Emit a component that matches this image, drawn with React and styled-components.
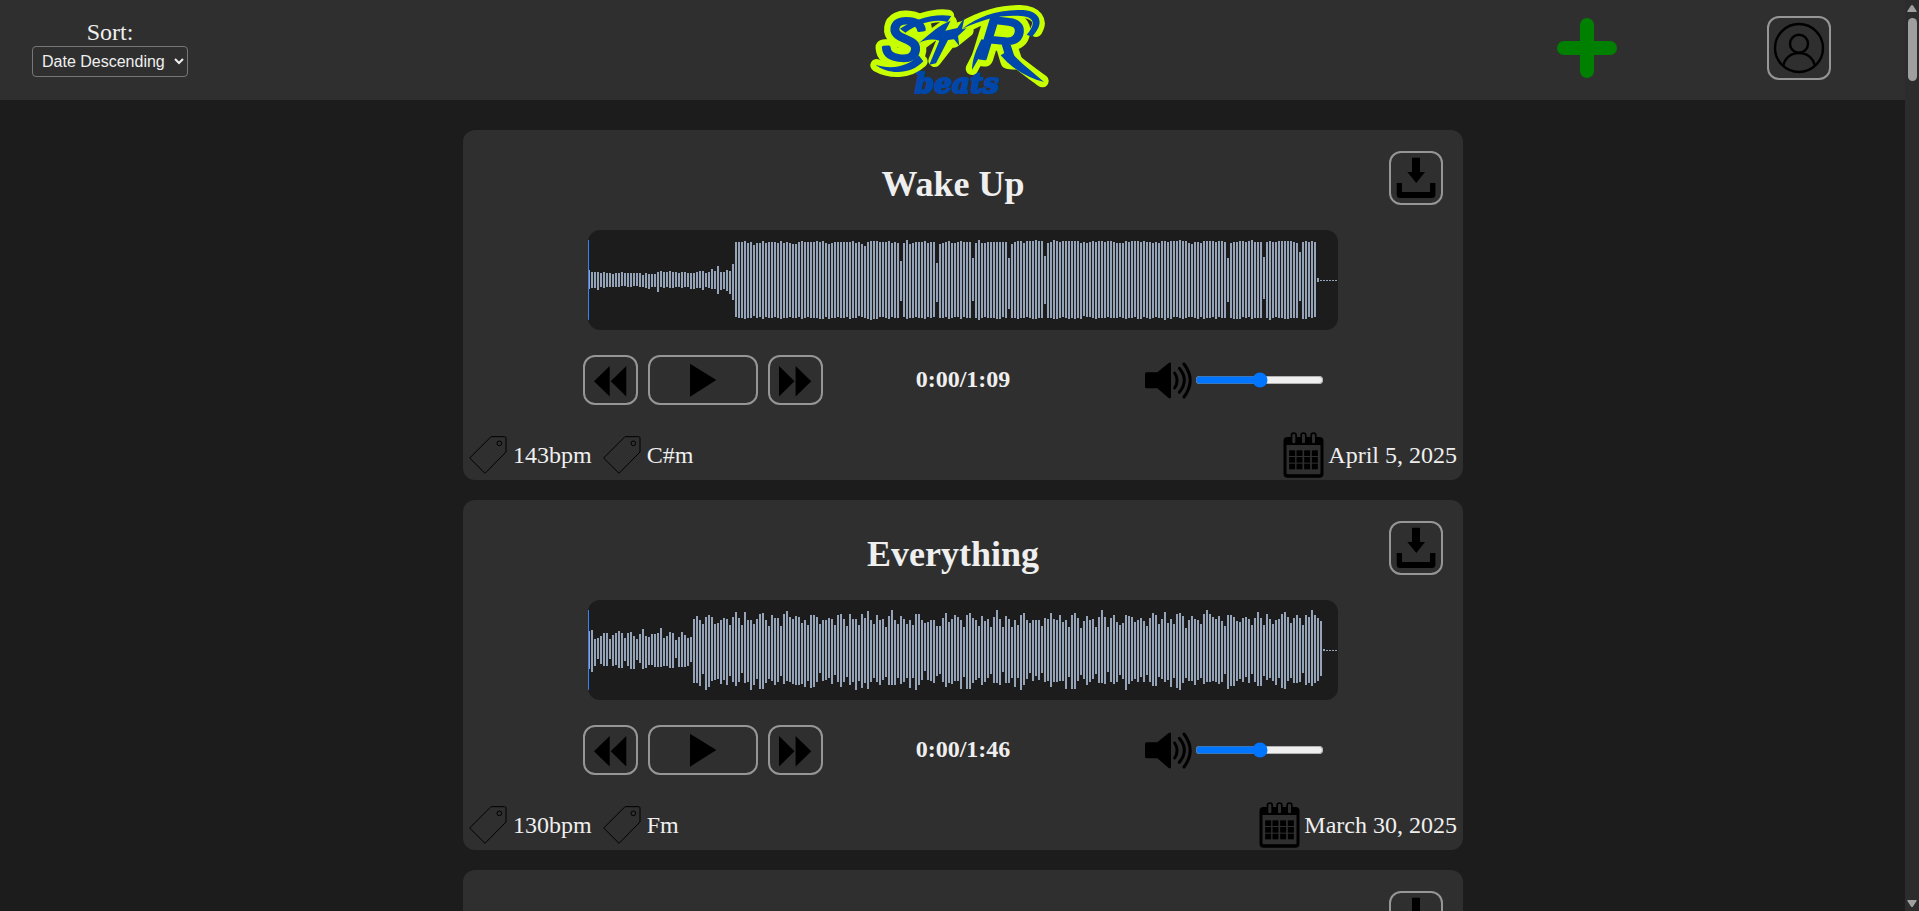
import React from "react";
import styled, { createGlobalStyle } from "styled-components";

const GlobalStyle = createGlobalStyle`
  * { box-sizing: border-box; }
  body {
    margin: 0;
    background: #1c1c1c;
    color: #efefef;
    font-family: "Liberation Serif", "Times New Roman", serif;
    font-size: 24px;
  }
`;

/* ---------- page frame ---------- */

const Shell = styled.div`
  display: flex;
  height: 100vh;
`;

const Page = styled.div`
  flex: 1;
  min-width: 0;
  overflow-y: auto;
  scrollbar-width: none;
`;

const ScrollTrack = styled.div`
  display: flex;
  flex-direction: column;
  align-items: center;
  width: 14px;
  padding: 5px 0 4px;
  background: #2c2c2c;
`;

const ScrollThumb = styled.div`
  width: 9px;
  height: 63px;
  margin: 6px 0 auto;
  border-radius: 5px;
  background: #9f9f9f;
`;

/* ---------- header ---------- */

const TopBar = styled.header`
  display: grid;
  grid-template-columns: 1fr auto 1fr;
  align-items: center;
  height: 100px;
  padding: 0 74px 0 32px;
  background: #2f2f2f;
`;

const SortBox = styled.div`
  display: flex;
  flex-direction: column;
  align-items: center;
  justify-self: start;
  padding-bottom: 4px;
`;

const SortLabel = styled.label`
  line-height: 27px;
`;

const SortSelect = styled.select`
  width: 156px;
  height: 31px;
  padding: 0 5px;
  border: 1px solid #767676;
  border-radius: 4px;
  background-color: #2f2f2f;
  color: #efefef;
  font-family: "Liberation Sans", Arial, sans-serif;
  font-size: 16px;
`;

const HomeLink = styled.a`
  display: block;
  height: 100px;
  margin-left: 57px;
`;

const LogoSvg = styled.svg`
  display: block;
  overflow: visible;
`;

const Actions = styled.div`
  display: flex;
  align-items: center;
  justify-content: flex-end;
  gap: 150px;
  padding-bottom: 4px;
`;

const PlainButton = styled.button`
  display: flex;
  padding: 0;
  border: 0;
  background: none;
  cursor: pointer;
`;

const OutlineButton = styled.button`
  display: flex;
  align-items: center;
  justify-content: center;
  flex: none;
  width: ${(p) => p.$w}px;
  height: ${(p) => p.$h}px;
  padding: 0;
  border: 2px solid #969696;
  border-radius: 12px;
  background: transparent;
  cursor: pointer;
`;

/* ---------- tracks ---------- */

const TrackList = styled.main`
  display: flex;
  flex-direction: column;
  align-items: center;
  gap: 20px;
  padding: 30px 0 30px 21px;
`;

const Card = styled.article`
  display: flex;
  flex-direction: column;
  align-items: center;
  width: 100%;
  max-width: 1000px;
  min-height: 350px;
  flex: none;
  padding-top: 21px;
  border-radius: 12px;
  background: #2f2f2f;
`;

const CardHead = styled.div`
  display: grid;
  grid-template-columns: 54px 1fr 54px;
  align-items: start;
  align-self: stretch;
  height: 79px;
  padding-right: 20px;
`;

const Title = styled.h2`
  grid-column: 2;
  margin: 13px 0 0;
  font-size: 36px;
  line-height: 40px;
  text-align: center;
`;

const DownloadCell = styled.div`
  grid-column: 3;
`;

const WaveBox = styled.div`
  width: 75%;
  height: 100px;
  padding: 10px 0;
  border-radius: 12px;
  background: #1c1c1c;
  overflow: hidden;
`;

const Controls = styled.div`
  display: grid;
  grid-template-columns: 1fr auto 1fr;
  align-items: center;
  width: 76%;
  margin: 25px 0;
`;

const Transport = styled.div`
  display: flex;
  gap: 10px;
`;

const Time = styled.span`
  font-weight: bold;
  line-height: 28px;
  padding-bottom: 2px;
`;

const Volume = styled.label`
  display: flex;
  align-items: center;
  justify-content: flex-end;
  gap: 3px;
  padding-right: 19px;
`;

const Slider = styled.input`
  width: 129px;
  height: 16px;
  margin: 0;
`;

const CardFoot = styled.footer`
  display: flex;
  align-items: center;
  align-self: stretch;
  gap: 11px;
  height: 50px;
  padding: 0 6px;
  line-height: 28px;
`;

const Tag = styled.span`
  display: flex;
  align-items: center;
  gap: 6px;
`;

const Released = styled.span`
  display: flex;
  align-items: center;
  gap: 4px;
  margin-left: auto;
`;

/* ---------- drawings ---------- */

const BrandLogo = () => (
  <LogoSvg width="220" height="100" viewBox="0 0 660 300" role="img" aria-label="S*R beats">
    <text x="194" y="278" fontFamily="'DejaVu Serif', serif" fontWeight="bold" fontStyle="italic" fontSize="84" fill="#0047ab" stroke="#0047ab" strokeWidth="6" strokeLinejoin="round">beats</text>
    <g fill="none" strokeLinecap="round" strokeLinejoin="round">
      <g stroke="#c8ff00" strokeWidth="38">
        <path d="M80 196C120 218 175 220 214 184" />
        <path d="M150 92C190 62 250 42 294 48" />
        <path d="M220 126L302 66L254 182L330 84L312 124L352 92" />
        <path d="M340 82C400 48 450 34 510 34C560 36 576 62 558 92" />
        <path d="M470 160C510 196 550 222 577 243" />
        <path d="M400 140L366 206" />
      </g>
      <g fontFamily="'Liberation Sans', Arial, sans-serif" fontStyle="italic" fontSize="180">
        <g stroke="#c8ff00" strokeWidth="48" fill="#c8ff00">
          <text x="98" y="180" transform="rotate(8 160 130)">S</text>
          <text x="388" y="180" transform="rotate(6 450 130)">R</text>
        </g>
        <g stroke="#0047ab" strokeWidth="10" fill="#0047ab">
          <text x="98" y="180" transform="rotate(8 160 130)">S</text>
          <text x="388" y="180" transform="rotate(6 450 130)">R</text>
        </g>
      </g>
      <g fill="#0047ab">
        <path d="M76 194C120 208 170 204 206 166L220 184C180 228 110 222 76 194Z" />
        <path d="M150 86C190 58 255 38 304 48L292 66C250 54 200 74 166 98Z" />
        <path d="M206 130C240 100 270 74 302 62L286 92L322 84L344 52L336 88L350 84L324 108L328 138L312 118L294 120L258 190L238 194L268 122C250 116 225 118 206 130Z" />
        <path d="M336 86C390 48 440 28 520 30C574 34 584 72 546 110L530 104C560 70 552 50 512 48C450 44 400 58 336 86Z" />
        <path d="M478 150C510 190 550 216 582 246C530 232 486 206 452 166Z" />
        <path d="M394 118L416 122L366 210C366 180 378 150 394 118Z" />
      </g>
    </g>
  </LogoSvg>
);

const PlusIcon = () => (
  <svg width="60" height="60" viewBox="0 0 60 60" fill="#008000" aria-hidden="true">
    <rect x="23" y="0" width="14" height="60" rx="7" />
    <rect x="0" y="23" width="60" height="14" rx="7" />
  </svg>
);

const UserIcon = () => (
  <svg width="60" height="60" viewBox="2 2 60 60" fill="none" stroke="#000" strokeWidth="2.4" aria-hidden="true">
    <circle cx="32" cy="32" r="24" />
    <circle cx="32" cy="27.8" r="9" />
    <path d="M16.3 49.5C18 42 24 37 32 37S46 42 47.9 49.5" />
  </svg>
);

const DownloadIcon = () => (
  <svg width="50" height="50" viewBox="2 2 50 50" aria-hidden="true">
    <path d="M23 6.7H31V21H36L27.3 32L18.3 21H23Z" />
    <path d="M7.7 32H13V41H41V32H46.4V43.5Q46.4 47 43 47H11Q7.7 47 7.7 43.5Z" />
  </svg>
);

const RewindIcon = () => (
  <svg width="51" height="46" viewBox="2 2 51 46" aria-hidden="true">
    <path d="M11 26.3L26.7 11V41.6ZM27.7 26.3L43.3 11V41.6Z" />
  </svg>
);

const PlayIcon = () => (
  <svg width="106" height="46" viewBox="2 2 106 46" aria-hidden="true">
    <path d="M42 8.7L68.3 25L42 41.7Z" />
  </svg>
);

const ForwardIcon = () => (
  <svg width="51" height="46" viewBox="2 2 51 46" aria-hidden="true">
    <path d="M11 11L26.5 26.3L11 41.6ZM27.6 11L43.3 26.3L27.6 41.6Z" />
  </svg>
);

const SpeakerIcon = () => (
  <svg width="47" height="37" viewBox="570 66 141 111" aria-hidden="true">
    <path d="M575 97H607L641 69Q648 65 648 72V171Q648 178 641 174L607 145H575Q570 145 570 140V102Q570 97 575 97Z" />
    <g fill="none" stroke="#000" strokeWidth="9" strokeLinecap="round">
      <path d="M659 99Q674 121 659 144" />
      <path d="M673 85Q703 121 673 157" />
      <path d="M687 72Q724 121 687 171" />
    </g>
  </svg>
);

const TagIcon = () => (
  <svg width="38" height="38" viewBox="43 288 114 114" fill="none" stroke="#000" strokeWidth="3" strokeLinejoin="round" aria-hidden="true">
    <path d="M109 290H150Q154 290 154 294V336L91 400L45 354Z" />
    <circle cx="134" cy="310" r="7" />
  </svg>
);

const CalendarIcon = () => (
  <svg width="41" height="46" viewBox="986 276 122 138" aria-hidden="true">
    <path fillRule="evenodd" d="M999 291H1095Q1107 291 1107 303V401Q1107 413 1095 413H999Q987 413 987 401V303Q987 291 999 291ZM996 315V399Q996 403 1000 403H1094Q1098 403 1098 399V315Z" />
    {[1018, 1047, 1077].map((x) => (
      <rect key={x} x={x - 7} y="279" width="14" height="33" rx="7" fill="#2f2f2f" stroke="#000" strokeWidth="5" />
    ))}
    {[331, 351, 371].map((y) =>
      [1004, 1026, 1049, 1072].map((x) => <rect key={`${x}-${y}`} x={x} y={y} width="18" height="17" />)
    )}
  </svg>
);

const ScrollArrow = ({ down }) => (
  <svg width="10" height="7" viewBox="0 0 10 7" fill="#9f9f9f" aria-hidden="true">
    <path d={down ? "M1 0H9Q10 0 9.6 1L6 6.4Q5 7.4 4 6.4L.4 1Q0 0 1 0Z" : "M1 7H9Q10 7 9.6 6L6 .6Q5 -.4 4 .6L.4 6Q0 7 1 7Z"} />
  </svg>
);

/* Each wave is a list of peaks above and below the centre line, one pair per bar. */
const Waveform = ({ up, down }) => (
  <svg width="100%" height="80" viewBox="0 0 750 80" preserveAspectRatio="none" shapeRendering="crispEdges" aria-hidden="true">
    <g fill="#94a3b8">
      {up.map((u, i) => (
        <rect key={i} x={i * 3} y={40 - u} width="2" height={u + down[i]} />
      ))}
    </g>
    <rect width="1" height="80" fill="#3b82f6" />
  </svg>
);

/* ---------- data ---------- */

const peaks = (text) => text.trim().split(/\s+/).map(Number);

const WAKE_UP = {
  up: peaks(`10 8 8 8 7 8 7 7 6 7 7 8 7 7 7 7 7 7 5 7 6 6 6 8 9 8 8 9 8 8 7 8 8 7 7 7 8 9 9 7 8 11 9 14 8 8 10 9 16
    38 38 38 39 37 38 35 37 37 39 37 38 38 38 37 39 37 38 37 36 36 38 39 38 38 38 38 39 38 39 37 36 37 38 38 38 38 38 38 39 37 38 36 34 38 39 39 39 38 38 38 39 37 38 37
    19 37 40 36 37 38 38 38 39 37 38 38 17 36 37 38 39 37 37 38 39 38 38 38 22 37 40 37 37 38 38 38 38 38 38 38 22 36 38 39 39 37 39 39 39 40 39 39
    24 37 38 40 39 38 39 39 39 39 39 39 37 38 37 38 39 38 39 39 38 39 39 38 37 37 37 39 38 39 39 39 38 39 38 38 37 38 37 39 39 38 39 39 39 40 39 39 37 36 38 38 37 39 39 39 39 38 39 39 38
    22 37 38 38 39 39 38 39 40 38 38 38 23 38 39 38 38 39 39 39 39 39 38 37 28 38 39 38 39 38 2 0 0 0 0 0 0`),
  down: peaks(`9 8 8 10 7 8 7 7 7 7 7 6 6 7 7 6 6 7 7 8 9 7 7 12 7 8 7 8 8 7 7 8 7 7 9 9 8 8 10 7 8 9 9 14 10 9 11 14 20
    37 38 38 39 38 38 36 38 37 39 37 38 38 37 38 39 38 38 37 38 38 37 39 38 37 38 38 38 39 39 37 39 38 38 37 38 38 37 39 38 38 36 37 38 39 40 39 39 37 37 38 39 37 38 38
    21 37 39 38 38 37 38 38 39 37 38 37 22 38 38 37 39 38 37 37 39 37 38 38 21 38 40 38 37 38 38 38 39 39 37 38 29 38 38 39 38 38 37 38 39 39 38 38
    24 38 38 39 39 38 37 38 39 38 39 38 39 36 37 37 38 39 38 38 38 37 38 38 38 37 38 39 38 38 37 39 39 37 38 39 38 37 38 38 40 38 39 37 37 38 39 38 37 37 38 39 37 39 38 38 37 39 37 38 38
    22 38 39 39 39 37 38 37 39 38 38 38 19 38 40 38 37 38 38 39 39 38 38 38 21 39 39 37 38 37 2 1 1 1 1 1 1`),
};

const EVERYTHING = {
  up: peaks(`19 20 11 12 14 17 17 11 15 17 19 17 12 17 18 14 11 16 21 14 13 16 16 17 22 12 14 18 17 10 13 18 15 12 13
    31 34 30 26 33 35 33 26 27 30 32 31 25 33 38 32 25 38 30 30 26 31 36 37 30 24 35 32 32 24 36 39 33 31 34 33 27 30 25 35 35 33 26 30 30 32 31 25 35 36 31 24 36 31 31 25 36 32 39 30 26 35 30 31 23
    34 40 30 26 34 31 26 30 25 36 36 30 27 28 30 30 24 24 32 37 28 31 35 33 30 23 35 37 32 30 24 34 29 31 23 33 40 31 23 34 31 23 30 25 35 37 30 27 30 30 30 24 32 31 37 31 30 35 28 30 23 35 37 32 22
    29 34 30 31 23 33 40 33 23 32 35 28 25 27 35 34 33 28 30 32 29 24 32 37 35 26 31 38 27 31 26 36 37 34 22 30 34 31 30 26 36 40 36 33 31 34 29 24 35 35 33 29 28 32 33 31 25 32 38 32 25 36 31 26 30
    31 36 38 33 27 32 35 32 25 35 33 40 35 32 29 1 0 0 0 0`),
  down: peaks(`19 22 16 9 14 16 16 9 16 15 18 18 11 16 19 19 10 13 19 18 15 15 17 17 17 16 16 18 18 8 17 17 17 16 12
    33 33 36 24 40 37 31 30 29 34 30 35 26 32 36 32 23 33 32 40 35 29 39 39 33 29 31 35 32 26 34 31 32 34 35 35 34 37 31 38 37 32 23 31 30 28 34 25 32 37 32 27 35 32 40 31 38 33 39 32 28 32 35 30 27
    35 35 35 28 34 32 28 38 28 40 35 30 21 30 31 33 26 24 32 37 33 34 31 31 39 27 39 39 33 30 28 35 32 28 24 33 33 35 22 33 33 28 37 28 40 35 29 23 31 26 30 23 32 31 37 32 32 31 31 39 27 39 39 31 25
    29 35 32 29 24 33 33 34 22 32 34 32 25 29 40 34 31 29 32 27 32 25 32 36 36 27 29 32 30 37 28 38 40 33 28 31 31 35 30 28 34 32 32 31 32 34 32 24 39 36 36 31 29 32 27 33 24 32 36 36 26 30 28 31 35
    28 38 39 31 28 33 33 32 23 35 33 36 33 31 26 1 1 1 1 1`),
};

const TRACKS = [
  { id: 1, title: "Wake Up", time: "0:00/1:09", tags: ["143bpm", "C#m"], date: "April 5, 2025", wave: WAKE_UP },
  { id: 2, title: "Everything", time: "0:00/1:46", tags: ["130bpm", "Fm"], date: "March 30, 2025", wave: EVERYTHING },
  { id: 3 },
];

const TrackCard = ({ track }) => (
  <Card>
    <CardHead>
      {track.title && <Title>{track.title}</Title>}
      <DownloadCell>
        <OutlineButton $w={54} $h={54} aria-label="Download"><DownloadIcon /></OutlineButton>
      </DownloadCell>
    </CardHead>
    {track.wave && (
      <>
        <WaveBox><Waveform {...track.wave} /></WaveBox>
        <Controls>
          <Transport>
            <OutlineButton $w={55} $h={50} aria-label="Rewind"><RewindIcon /></OutlineButton>
            <OutlineButton $w={110} $h={50} aria-label="Play"><PlayIcon /></OutlineButton>
            <OutlineButton $w={55} $h={50} aria-label="Forward"><ForwardIcon /></OutlineButton>
          </Transport>
          <Time>{track.time}</Time>
          <Volume>
            <SpeakerIcon />
            <Slider type="range" min="0" max="100" defaultValue="50" aria-label="Volume" />
          </Volume>
        </Controls>
        <CardFoot>
          {track.tags.map((tag) => (
            <Tag key={tag}><TagIcon />{tag}</Tag>
          ))}
          <Released><CalendarIcon />{track.date}</Released>
        </CardFoot>
      </>
    )}
  </Card>
);

export default function App() {
  return (
    <Shell>
      <GlobalStyle />
      <Page>
        <TopBar>
          <SortBox>
            <SortLabel htmlFor="sort">Sort:</SortLabel>
            <SortSelect id="sort" defaultValue="date-desc">
              <option value="date-desc">Date Descending</option>
            </SortSelect>
          </SortBox>
          <HomeLink href="#"><BrandLogo /></HomeLink>
          <Actions>
            <PlainButton aria-label="Add beat"><PlusIcon /></PlainButton>
            <OutlineButton $w={64} $h={64} aria-label="Account"><UserIcon /></OutlineButton>
          </Actions>
        </TopBar>
        <TrackList>
          {TRACKS.map((track) => (
            <TrackCard key={track.id} track={track} />
          ))}
        </TrackList>
      </Page>
      <ScrollTrack aria-hidden="true">
        <ScrollArrow />
        <ScrollThumb />
        <ScrollArrow down />
      </ScrollTrack>
    </Shell>
  );
}
